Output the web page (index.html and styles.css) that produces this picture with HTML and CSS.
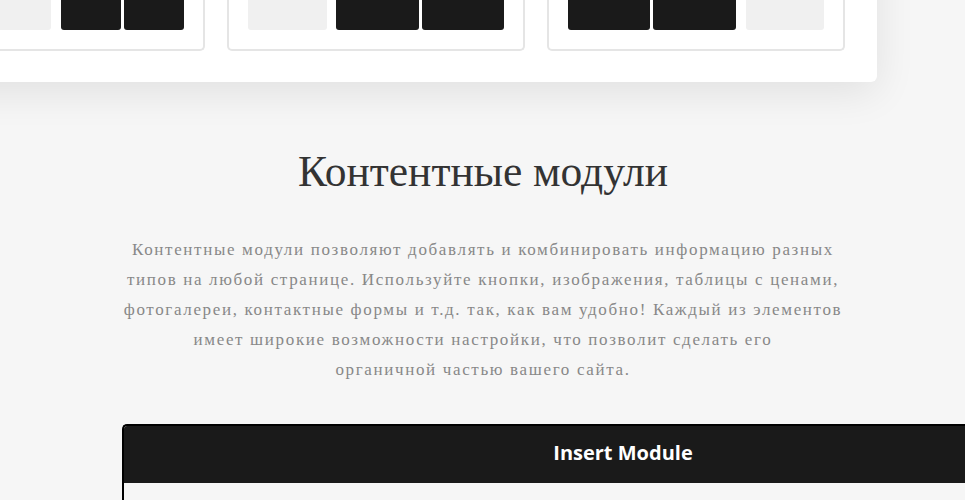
FILE: index.html
```html
<!DOCTYPE html>
<html lang="ru">
<head>
<meta charset="utf-8">
<title>Контентные модули</title>
<link rel="stylesheet" href="styles.css">
</head>
<body>
<div class="hero">
  <div class="tile">
    <div class="blk grey fill"></div>
    <div class="pair">
      <div class="blk dark w60"></div>
      <div class="blk dark w60"></div>
    </div>
  </div>
  <div class="tile tile-b">
    <div class="blk grey w79"></div>
    <div class="pair">
      <div class="blk dark w83"></div>
      <div class="blk dark w82"></div>
    </div>
  </div>
  <div class="tile">
    <div class="pair">
      <div class="blk dark w82"></div>
      <div class="blk dark w83"></div>
    </div>
    <div class="blk grey w78"></div>
  </div>
</div>

<section class="intro">
  <h1 class="title">Контентные модули</h1>
  <p class="lead">Контентные модули позволяют добавлять и комбинировать информацию разных типов на любой странице. Используйте кнопки, изображения, таблицы с ценами, фотогалереи, контактные формы и т.д. так, как вам удобно! Каждый из элементов имеет широкие возможности настройки, что позволит сделать его<br>органичной частью вашего сайта.</p>
</section>

<div class="modal">
  <div class="modal-head">Insert Module</div>
  <div class="modal-body"></div>
</div>
</body>
</html>
```

FILE: styles.css
```css
html, body {
  margin: 0;
  padding: 0;
}
body {
  background: #f6f6f6;
  overflow: hidden;
  width: 965px;
  height: 500px;
}
.hero {
  box-sizing: border-box;
  width: 1001px;
  height: 182px;
  margin: -100px 0 0 -124px;
  padding: 0 32px 31px 31px;
  background: #fff;
  border-radius: 0 0 6px 6px;
  box-shadow: 0 10px 40px rgba(0, 0, 0, 0.09);
  display: flex;
  gap: 22px;
}
.tile {
  box-sizing: border-box;
  width: 298px;
  border: 2px solid #e5e5e5;
  border-top: 0;
  border-radius: 0 0 5px 5px;
  padding: 0 19px 19px;
  display: flex;
  align-items: flex-end;
  gap: 10px;
}
.tile-b { gap: 9px; }
.pair {
  display: flex;
  gap: 3px;
}
.blk {
  height: 80px;
  border-radius: 0 0 3px 3px;
}
.grey { background: #f0f0f0; }
.dark { background: #1a1a1a; }
.fill { flex: 1; }
.w60 { width: 60px; }
.w78 { width: 78px; }
.w79 { width: 79px; }
.w82 { width: 82px; }
.w83 { width: 83px; }

.intro {
  text-align: center;
  margin-left: 1px;
}
.title {
  margin: 63px 0 0;
  font-family: "Liberation Serif", "DejaVu Serif", serif;
  font-weight: normal;
  font-size: 43.5px;
  line-height: 52px;
  color: #333;
}
.lead {
  width: 740px;
  margin: 38px auto 0;
  font-family: "Liberation Serif", "DejaVu Serif", serif;
  font-size: 17px;
  letter-spacing: 1.65px;
  line-height: 30px;
  color: #888;
}

.modal {
  box-sizing: border-box;
  width: 1000px;
  margin: 39px 0 0 122px;
  border: 2px solid #000;
  border-bottom: 0;
  border-right: 0;
  border-radius: 5px 0 0 0;
  background: #f6f6f6;
}
.modal-head {
  height: 57px;
  background: #1a1a1a;
  color: #fff;
  font-family: "Open Sans", sans-serif;
  font-weight: bold;
  font-size: 20px;
  line-height: 53px;
  text-align: center;
  border-radius: 3px 0 0 0;
}
.modal-body {
  height: 100px;
}
```
